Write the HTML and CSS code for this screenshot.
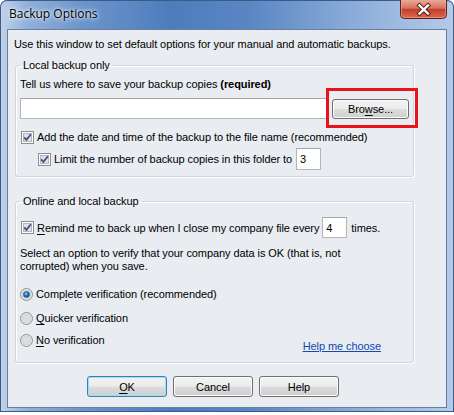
FILE: index.html
```html
<!DOCTYPE html>
<html>
<head>
<meta charset="utf-8">
<link rel="stylesheet" href="styles.css">
</head>
<body>
<div class="window">
  <div class="titlebar">
    <span class="title">Backup Options</span>
    <span class="close">
      <svg width="47" height="19" viewBox="0 0 47 19">
        <defs>
          <linearGradient id="cg" x1="0" y1="0" x2="0" y2="1">
            <stop offset="0" stop-color="#eaa99b"/>
            <stop offset="0.45" stop-color="#d6705d"/>
            <stop offset="0.5" stop-color="#c23f29"/>
            <stop offset="1" stop-color="#dc6a52"/>
          </linearGradient>
        </defs>
        <path d="M0.5 0 V14.5 Q0.5 18.5 4.5 18.5 H42.5 Q46.5 18.5 46.5 14.5 V0" fill="url(#cg)" stroke="#5e2219"/>
        <path d="M1.5 1 V14 Q1.5 17.5 5 17.5 H42 Q45.5 17.5 45.5 14 V1" fill="none" stroke="#f0b5a8" stroke-opacity="0.5"/>
        <path d="M19.5 5.5 L28 13.5 M28 5.5 L19.5 13.5" stroke="#4a1a12" stroke-width="4.2" stroke-linecap="square"/>
        <path d="M19.5 5.5 L28 13.5 M28 5.5 L19.5 13.5" stroke="#ffffff" stroke-width="2.4" stroke-linecap="square"/>
      </svg>
    </span>
  </div>
  <div class="client">
    <p class="intro">Use this window to set default options for your manual and automatic backups.</p>

    <fieldset class="group group-local">
      <legend>Local backup only</legend>
      <div class="line">Tell us where to save your backup copies <b>(required)</b></div>
      <div class="path-row">
        <span class="field path"></span>
        <span class="browse-wrap">
          <span class="btn browse">Bro<u>w</u>se...</span>
          <span class="callout"></span>
        </span>
      </div>
      <div class="check-row row-add">
        <svg class="cb" width="13" height="13" viewBox="0 0 13 13"><rect x="0.5" y="0.5" width="12" height="12" fill="#fdfdfd" stroke="#8e8f8f"/><rect x="2.5" y="2.5" width="8" height="8" fill="#dfe1e5" stroke="#b4b7bc"/><path d="M3.2 6.3 L5.4 8.8 L9.9 3.2" fill="none" stroke="#3c5287" stroke-width="1.8"/></svg>
        <span>Add the date and time of the backup to the file name (recommended)</span>
      </div>
      <div class="check-row row-limit">
        <svg class="cb" width="13" height="13" viewBox="0 0 13 13"><rect x="0.5" y="0.5" width="12" height="12" fill="#fdfdfd" stroke="#8e8f8f"/><rect x="2.5" y="2.5" width="8" height="8" fill="#dfe1e5" stroke="#b4b7bc"/><path d="M3.2 6.3 L5.4 8.8 L9.9 3.2" fill="none" stroke="#3c5287" stroke-width="1.8"/></svg>
        <span>Limit the number of backup copies in this folder to</span>
        <span class="field spin spin-3">3</span>
      </div>
    </fieldset>

    <fieldset class="group group-online">
      <legend>Online and local backup</legend>
      <div class="check-row row-remind">
        <svg class="cb" width="13" height="13" viewBox="0 0 13 13"><rect x="0.5" y="0.5" width="12" height="12" fill="#fdfdfd" stroke="#8e8f8f"/><rect x="2.5" y="2.5" width="8" height="8" fill="#dfe1e5" stroke="#b4b7bc"/><path d="M3.2 6.3 L5.4 8.8 L9.9 3.2" fill="none" stroke="#3c5287" stroke-width="1.8"/></svg>
        <span><u>R</u>emind me to back up when I close my company file every</span>
        <span class="field spin spin-4">4</span>
        <span class="times">times.</span>
      </div>
      <p class="select-text">Select an option to verify that your company data is OK (that is, not corrupted) when you save.</p>
      <div class="radio-row r1">
        <svg class="rb" width="13" height="13" viewBox="0 0 13 13"><circle cx="6.5" cy="6.5" r="6" fill="#eeeeee" stroke="#8e8f8f"/><circle cx="6.5" cy="6.5" r="4.5" fill="#e2e3e5" stroke="#c9cacc" stroke-width="0.8"/><circle cx="6.5" cy="6.5" r="3.3" fill="#1c5d9b"/><circle cx="6.1" cy="5.8" r="1.6" fill="#6fb6ea"/></svg>
        <span>Comp<u>l</u>ete verification (recommended)</span>
      </div>
      <div class="radio-row r2">
        <svg class="rb" width="13" height="13" viewBox="0 0 13 13"><circle cx="6.5" cy="6.5" r="6" fill="#eeeeee" stroke="#8e8f8f"/><circle cx="6.5" cy="6.5" r="4.5" fill="#dcdde0" stroke="#c9cacc" stroke-width="0.8"/></svg>
        <span><u>Q</u>uicker verification</span>
      </div>
      <div class="radio-row r3">
        <span class="radio-label">
          <svg class="rb" width="13" height="13" viewBox="0 0 13 13"><circle cx="6.5" cy="6.5" r="6" fill="#eeeeee" stroke="#8e8f8f"/><circle cx="6.5" cy="6.5" r="4.5" fill="#dcdde0" stroke="#c9cacc" stroke-width="0.8"/></svg>
          <span><u>N</u>o verification</span>
        </span>
        <span class="help-link">Help me choose</span>
      </div>
    </fieldset>

    <div class="buttons">
      <span class="btn btn-default"><u>O</u>K</span>
      <span class="btn">Cancel</span>
      <span class="btn">Help</span>
    </div>
  </div>
</div>
</body>
</html>
```
FILE: styles.css
```css
html, body {
  margin: 0;
  padding: 0;
  background: #ffffff;
}

.window {
  width: 454px;
  height: 412px;
  box-sizing: border-box;
  padding: 0 7px 4px 7px;
  display: flex;
  flex-direction: column;
  border-radius: 7px 7px 0 0;
  background:
    linear-gradient(to right, #c2d3e9 0%, #8fb0da 6%, #6d95cb 18%, #4d7cbd 38%, #5a86c3 55%, #7ea3d4 72%, #9fbbe1 88%, #b4cbe9 100%);
  box-shadow: inset 0 0 0 1px #3c5a86;
}

.titlebar {
  height: 29px;
  display: flex;
  align-items: flex-start;
  justify-content: space-between;
}

.title {
  margin-top: 6px;
  padding-left: 2px;
  font-family: "Open Sans", "Noto Sans", sans-serif;
  font-size: 12px;
  line-height: 16px;
  color: #000;
  text-shadow: 0 0 6px #ffffff, 0 0 3px #ffffff;
}

.close {
  display: block;
  height: 19px;
}
.close svg { display: block; }

.client {
  height: 379px;
  box-sizing: border-box;
  border: 1px solid #6a7f9e;
  background: #e9ecf1;
  font-family: "Liberation Sans", Arial, sans-serif;
  font-size: 11px;
  letter-spacing: -0.08px;
  line-height: 14px;
  color: #000;
  display: flex;
  flex-direction: column;
}

.intro {
  margin: 7px 0 0 6px;
}

.group {
  margin: 7px 0 0 7px;
  width: 399px;
  box-sizing: border-box;
  border: 1px solid #cfd6de;
  border-radius: 3px;
  box-shadow: inset 1px 1px 0 #ffffff, 1px 1px 0 #ffffff;
  padding: 5px 4px 6px 4px;
  display: flex;
  flex-direction: column;
}

.group legend {
  padding: 0 3px;
  line-height: 14px;
}

.group-online {
  margin-top: 17px;
  padding-top: 9px;
  padding-bottom: 9px;
}

.path-row {
  margin-top: 7px;
  display: flex;
  align-items: center;
  height: 21px;
}

.field {
  box-sizing: border-box;
  display: block;
  background: #ffffff;
  border: 1px solid #b3b5ba;
  border-top-color: #a4a6ab;
}

.path {
  width: 307px;
  height: 21px;
}

.browse-wrap {
  position: relative;
  margin-left: 5px;
  display: block;
}

.btn {
  box-sizing: border-box;
  display: flex;
  align-items: center;
  justify-content: center;
  width: 80px;
  height: 21px;
  border: 1px solid #707070;
  border-radius: 3px;
  background: linear-gradient(to bottom, #f3f3f3 0%, #ececec 48%, #dcdcdc 52%, #cfcfcf 100%);
  box-shadow: inset 0 0 0 1px #fbfbfb;
  color: #000;
}

.browse {
  width: 77px;
  height: 20px;
}

.callout {
  position: absolute;
  left: -6px;
  top: -11px;
  right: -9px;
  bottom: -9px;
  border: 3px solid #e8141c;
}

.check-row {
  display: flex;
  align-items: center;
}

.cb, .rb {
  display: block;
  flex: none;
  margin-right: 3px;
}

.row-add {
  margin-top: 11px;
  height: 14px;
  padding-left: 1px;
}

.row-limit {
  margin-top: 4px;
  height: 22px;
  padding-left: 18px;
}

.spin {
  width: 25px;
  height: 22px;
  padding: 3px 0 0 3px;
  line-height: 14px;
}

.spin-3 {
  margin-left: 4px;
}

.row-remind {
  height: 21px;
  padding-left: 1px;
}

.spin-4 {
  margin-left: 3px;
  height: 21px;
}

.times {
  margin-left: 4px;
}

.select-text {
  margin: 9px 0 0 0;
  line-height: 13px;
  width: 345px;
}

.radio-row {
  display: flex;
  align-items: center;
  height: 14px;
}

.r1 { margin-top: 14px; }
.r2 { margin-top: 10px; }

.r3 {
  margin-top: 8px;
  height: 20px;
  justify-content: space-between;
  align-items: flex-start;
}

.radio-label {
  display: flex;
  align-items: center;
  height: 14px;
}

.help-link {
  align-self: flex-end;
  margin-right: 28px;
  color: #1248b0;
  text-decoration: underline;
}

.buttons {
  margin-top: 13px;
  padding-left: 79px;
  display: flex;
  gap: 6px;
}

.btn-default {
  border-color: #3c7fb1;
  box-shadow: inset 0 0 0 1px #9fdcf7;
}

u {
  text-decoration-thickness: 1px;
  text-underline-offset: 2px;
}
```
